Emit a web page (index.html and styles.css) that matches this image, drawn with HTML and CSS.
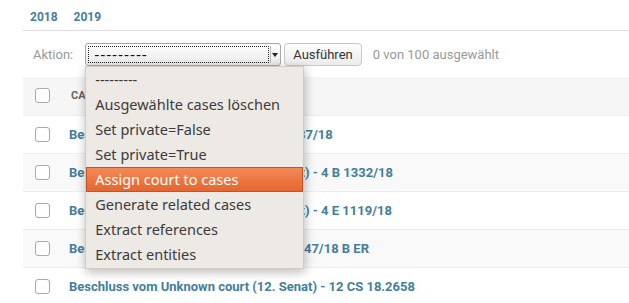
FILE: index.html
```html
<!DOCTYPE html>
<html lang="de">

<head>
  <meta charset="utf-8">
  <title>Cases auswählen</title>
  <link rel="stylesheet" href="styles.css">
</head>

<body>
  <div class="changelist">
    <!-- Datumsleiste -->
    <div class="dateBar">
      <a href="#">2018</a><a href="#">2019</a>
    </div>

    <!-- Aktionen -->
    <div class="actions">
      <label>Aktion:</label>
      <div class="selectWrap">
        <div class="selectBox">
          <span class="selectText">---------</span>
          <span class="selectArrow"></span>
        </div>
        <!-- offenes Menü -->
        <ul class="menu">
          <li>---------</li>
          <li>Ausgewählte cases löschen</li>
          <li>Set private=False</li>
          <li>Set private=True</li>
          <li class="hover">Assign court to cases</li>
          <li>Generate related cases</li>
          <li>Extract references</li>
          <li>Extract entities</li>
        </ul>
      </div>
      <button class="go">Ausführen</button>
      <span class="counter">0 von 100 ausgewählt</span>
    </div>

    <!-- Ergebnistabelle -->
    <table class="results">
      <thead>
        <tr>
          <th class="check"><span class="box"></span></th>
          <th>Case</th>
        </tr>
      </thead>
      <tbody>
        <tr>
          <td class="check"><span class="box"></span></td>
          <td><a href="#">Beschluss vom Unknown court - 10 C 437/18</a></td>
        </tr>
        <tr class="row2">
          <td class="check"><span class="box"></span></td>
          <td><a href="#">Beschluss vom Unknown court (4. Senat) - 4 B 1332/18</a></td>
        </tr>
        <tr>
          <td class="check"><span class="box"></span></td>
          <td><a href="#">Beschluss vom Unknown court (4. Senat) - 4 E 1119/18</a></td>
        </tr>
        <tr class="row2">
          <td class="check"><span class="box"></span></td>
          <td><a href="#">Beschluss vom Unknown court - 19 L 2247/18 B ER</a></td>
        </tr>
        <tr>
          <td class="check"><span class="box"></span></td>
          <td><a href="#">Beschluss vom Unknown court (12. Senat) - 12 CS 18.2658</a></td>
        </tr>
      </tbody>
    </table>
  </div>
</body>

</html>
```

FILE: styles.css
```css
* {
  margin: 0;
  padding: 0;
  box-sizing: border-box;
}

body {
  font-family: Roboto, "Liberation Sans", sans-serif;
  font-size: 13px;
  color: #333;
  background: #fff;
}

a {
  color: #447e9b;
  text-decoration: none;
  font-weight: bold;
}

.changelist {
  margin-left: 23px;
}

/* Jahre oben */
.dateBar {
  height: 31px;
  padding: 10px 0 0 7px;
  border-bottom: 1px solid #ddd;
  font-size: 12px;
}

.dateBar a {
  margin-right: 16px;
}

/* Aktionsleiste */
.actions {
  height: 46px;
  display: flex;
  align-items: center;
  padding-left: 10px;
  color: #999;
}

.actions label {
  margin-right: 12px;
}

.selectWrap {
  position: relative;
  margin-right: 3px;
}

.selectBox {
  width: 196px;
  height: 23px;
  border: 1px solid #a7a7a7;
  border-radius: 3px;
  background: linear-gradient(#fefefe, #e9e9e9);
  display: flex;
  align-items: stretch;
  padding: 2px;
}

.selectText {
  flex: 1;
  border: 1px dotted #222;
  padding-left: 5px;
  line-height: 16px;
  font-family: "DejaVu Sans", sans-serif;
  font-size: 14px;
  color: #111;
  letter-spacing: 0.9px;
}

.selectArrow {
  width: 8px;
  margin-left: 1px;
  border-left: 1px solid #bbb;
  position: relative;
}

.selectArrow::after {
  content: "";
  position: absolute;
  top: 7px;
  left: 1px;
  border-left: 3px solid transparent;
  border-right: 3px solid transparent;
  border-top: 4px solid #222;
}

/* aufgeklapptes Menü */
.menu {
  position: absolute;
  top: 23px;
  left: 0;
  width: 219px;
  list-style: none;
  background: #ede9e4;
  border: 1px solid #d3cac0;
  box-shadow: 1px 3px 10px rgba(0, 0, 0, 0.28);
  padding: 0 0 1px;
  z-index: 5;
  font-family: "Noto Sans", sans-serif;
  font-size: 14.5px;
  color: #3c3c3c;
}

.menu li {
  height: 25px;
  line-height: 24px;
  padding-left: 9px;
}

.menu li.hover {
  background: linear-gradient(#f38a57, #e5662f);
  border: 1px solid #c45426;
  color: #fff;
  padding-left: 8px;
  line-height: 22px;
}

.go {
  height: 23px;
  padding: 0 8px;
  border: 1px solid #c8c8c8;
  border-radius: 4px;
  background: linear-gradient(#fdfdfd, #ececec);
  font-family: Roboto, sans-serif;
  font-size: 13px;
  color: #333;
  margin-right: 11px;
}

.counter {
  color: #999;
}

/* Tabelle */
.results {
  width: 100%;
  border-collapse: collapse;
}

.results th {
  height: 38px;
  background: #f6f6f6;
  border-bottom: 1px solid #eee;
  text-align: left;
  font-size: 11px;
  color: #666;
  text-transform: uppercase;
  padding-left: 13px;
}

.results td {
  height: 38px;
  border-bottom: 1px solid #eee;
  padding-left: 11px;
}

.results tr.row2 td {
  background: #f9f9f9;
}

.results .check {
  width: 35px;
  padding-left: 12px;
}

.box {
  display: block;
  width: 15px;
  height: 15px;
  border: 1px solid #a9a9a9;
  border-radius: 3px;
  background: #fff;
}
```
